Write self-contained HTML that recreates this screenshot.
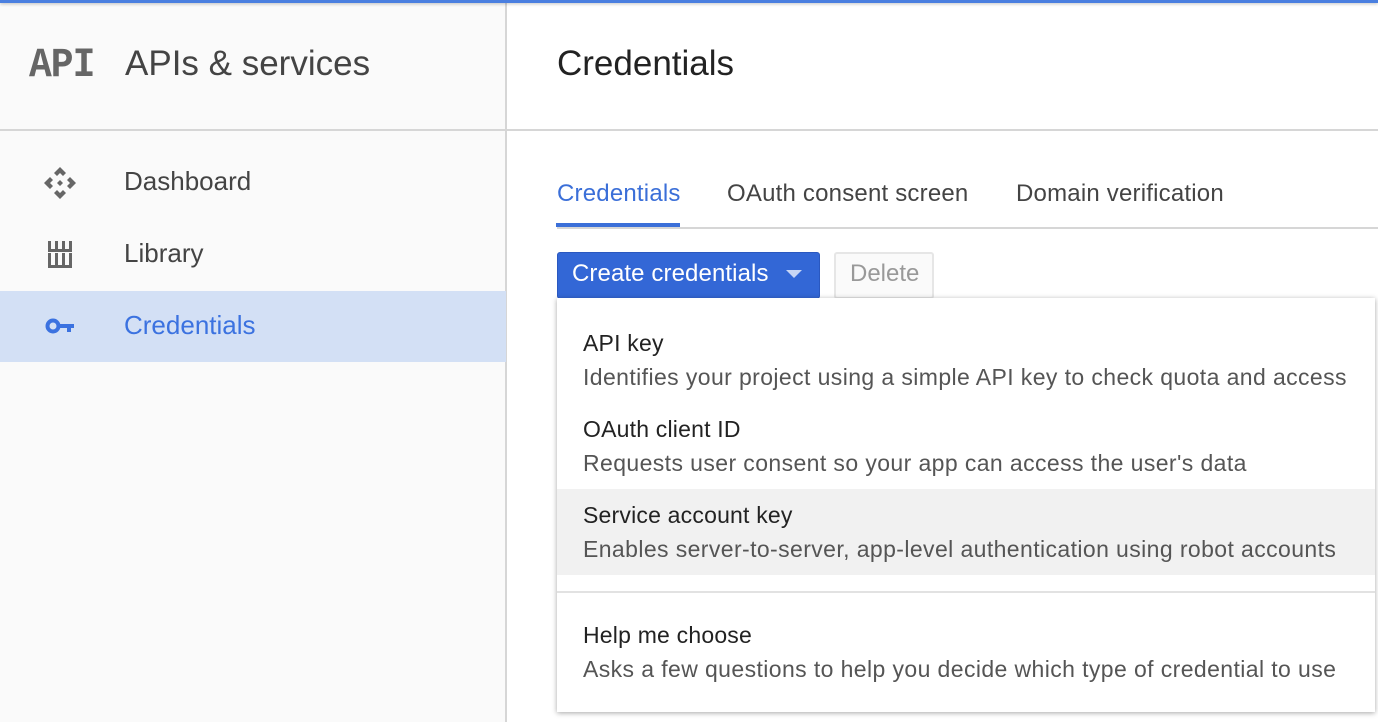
<!DOCTYPE html>
<html><head><style>
*{margin:0;padding:0;box-sizing:border-box}
body{width:1378px;height:722px;overflow:hidden;background:#fff;font-family:"Liberation Sans",Arial,sans-serif;position:relative}
.abs{position:absolute;white-space:nowrap}
#top{position:absolute;left:0;top:0;width:1378px;height:3px;background:#4a7fe0;box-shadow:0 1px 3px rgba(0,0,0,.25)}
#side{position:absolute;left:0;top:3px;width:507px;height:719px;background:#fafafa;border-right:2px solid #d6d6d6}
#hdrline{position:absolute;left:0;top:129px;width:1378px;height:2px;background:#d6d6d6}
.nav{color:#444;font-size:26px}
#sel{position:absolute;left:0;top:291px;width:506px;height:71px;background:#d3e0f5}
.tab{font-size:24px;color:#444;letter-spacing:0.2px}
#menu{position:absolute;left:557px;top:298px;width:818px;height:414px;background:#fff;box-shadow:0 1px 5px rgba(0,0,0,.35)}
.t{font-size:23px;color:#222;left:26px;letter-spacing:0.2px}
.d{font-size:23px;color:#555;left:26px;letter-spacing:0.4px}
</style></head><body>
<div id="side"></div>
<div id="top"></div>
<div id="hdrline"></div>
<div class="abs" style="left:29px;top:44px;font-family:'Liberation Mono',monospace;font-weight:bold;font-size:38px;color:#666;letter-spacing:-1px;transform:scaleY(1.1)">API</div>
<div class="abs" style="left:125px;top:44px;font-size:35px;color:#444">APIs &amp; services</div>
<div class="abs" style="left:557px;top:44px;font-size:35px;color:#222">Credentials</div>

<svg class="abs" style="left:44px;top:167px" width="32" height="32" viewBox="0 0 32 32" fill="#666">
<path d="M16 0l6 6-3 3-3-3-3 3-3-3z M0 16l6-6 3 3-3 3 3 3-3 3z M32 16l-6-6-3 3 3 3-3 3 3 3z M16 32l6-6-3-3-3 3-3-3-3 3z M16 13l3 3-3 3-3-3z"/></svg>
<div class="abs nav" style="left:124px;top:166px">Dashboard</div>
<svg class="abs" style="left:48px;top:241px" width="24" height="28" viewBox="0 0 24 28" fill="#666">
<rect x="0" y="0" width="3" height="8"/><rect x="7" y="0" width="3" height="8"/><rect x="14" y="0" width="3" height="8"/><rect x="21" y="0" width="3" height="8"/>
<rect x="0" y="8" width="24" height="3"/>
<rect x="0" y="12" width="3" height="12"/><rect x="7" y="12" width="3" height="12"/><rect x="14" y="12" width="3" height="12"/><rect x="21" y="12" width="3" height="12"/>
<rect x="0" y="24" width="24" height="3"/></svg>
<div class="abs nav" style="left:124px;top:238px">Library</div>
<div id="sel"></div>
<svg class="abs" style="left:45px;top:316px" width="30" height="20" viewBox="0 0 30 20">
<circle cx="8" cy="10" r="5.5" fill="none" stroke="#3b72e0" stroke-width="4"/><path d="M13 8h16v4h-3v4h-4v-4h-9z" fill="#3b72e0"/></svg>
<div class="abs nav" style="left:124px;top:310px;color:#3b72e0">Credentials</div>

<div class="abs tab" style="left:557px;top:180px;color:#3b6fd8">Credentials</div>
<div class="abs tab" style="left:727px;top:180px">OAuth consent screen</div>
<div class="abs tab" style="left:1016px;top:180px">Domain verification</div>
<div class="abs" style="left:557px;top:227px;width:821px;height:2px;background:#d6d6d6"></div>
<div class="abs" style="left:556px;top:223px;width:124px;height:4px;background:#3b6fd8"></div>

<div class="abs" style="left:557px;top:252px;width:263px;height:47px;background:#3367d6;border-radius:3px;border:1px solid #2a58c0"></div>
<div class="abs" style="left:572px;top:260px;font-size:24px;color:#fff;letter-spacing:0.1px">Create credentials</div>
<svg class="abs" style="left:786px;top:270px" width="16" height="9"><path d="M0 0h16L8 8z" fill="#c8d6f5"/></svg>
<div class="abs" style="left:834px;top:252px;width:100px;height:47px;border:2px solid #e6e6e6;border-radius:3px;background:#fafafa"></div>
<div class="abs" style="left:850px;top:260px;font-size:24px;color:#999">Delete</div>

<div id="menu">
<div class="abs" style="left:0;top:191px;width:818px;height:86px;background:#f1f1f1"></div>
<div class="abs" style="left:0;top:293px;width:818px;height:2px;background:#e2e2e2"></div>
<div class="abs t" style="top:32px">API key</div>
<div class="abs d" style="top:66px">Identifies your project using a simple API key to check quota and access</div>
<div class="abs t" style="top:118px">OAuth client ID</div>
<div class="abs d" style="top:152px">Requests user consent so your app can access the user's data</div>
<div class="abs t" style="top:204px">Service account key</div>
<div class="abs d" style="top:238px">Enables server-to-server, app-level authentication using robot accounts</div>
<div class="abs t" style="top:324px">Help me choose</div>
<div class="abs d" style="top:358px">Asks a few questions to help you decide which type of credential to use</div>
</div>
</body></html>
